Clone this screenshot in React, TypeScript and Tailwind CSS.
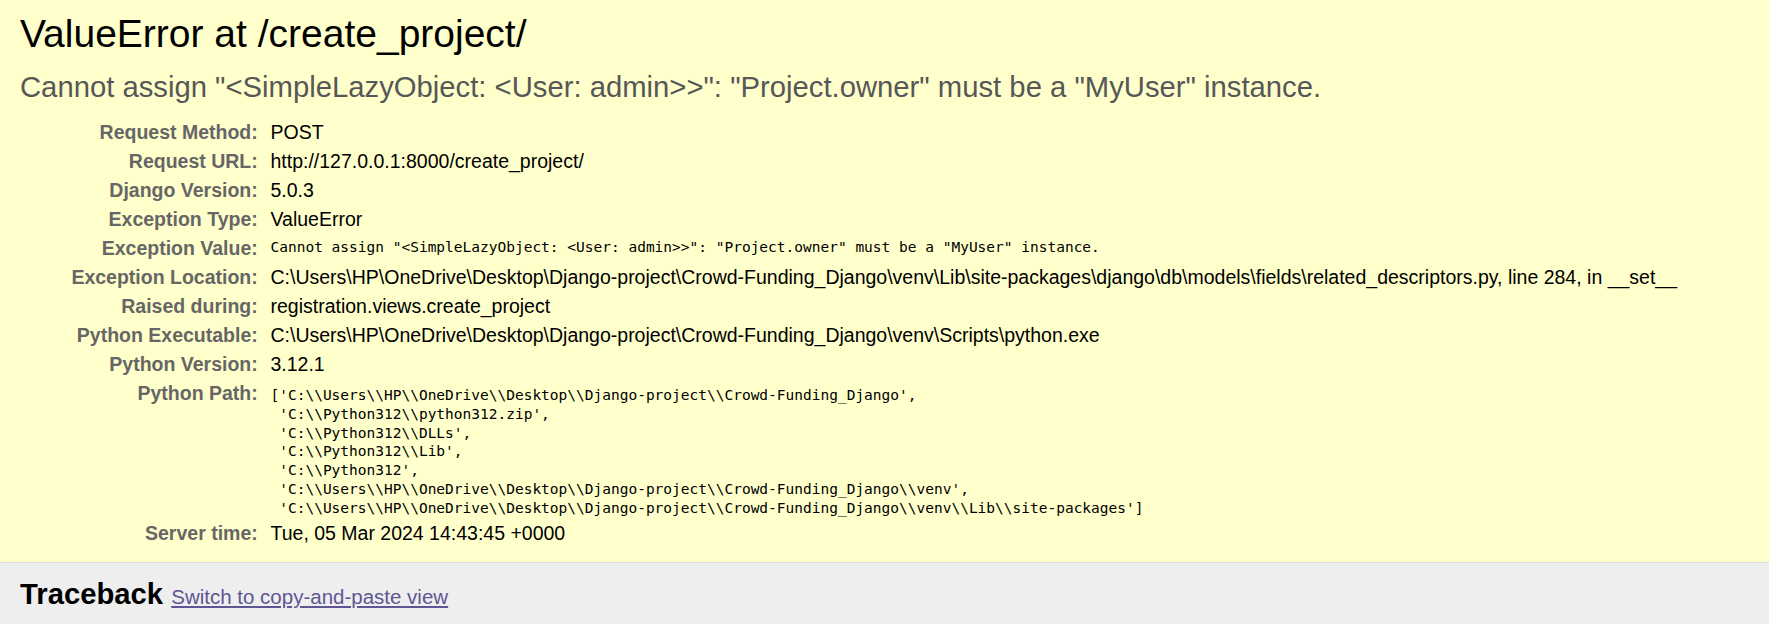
const SANS = "font-['Liberation_Sans',Arial,sans-serif]";
const MONO = "font-['DejaVu_Sans_Mono',monospace]";

type Row = { label: string; value: string; mono?: boolean };

const rows: Row[] = [
  { label: "Request Method:", value: "POST" },
  { label: "Request URL:", value: "http://127.0.0.1:8000/create_project/" },
  { label: "Django Version:", value: "5.0.3" },
  { label: "Exception Type:", value: "ValueError" },
  {
    label: "Exception Value:",
    value: 'Cannot assign "<SimpleLazyObject: <User: admin>>": "Project.owner" must be a "MyUser" instance.',
    mono: true,
  },
  {
    label: "Exception Location:",
    value:
      "C:\\Users\\HP\\OneDrive\\Desktop\\Django-project\\Crowd-Funding_Django\\venv\\Lib\\site-packages\\django\\db\\models\\fields\\related_descriptors.py, line 284, in __set__",
  },
  { label: "Raised during:", value: "registration.views.create_project" },
  {
    label: "Python Executable:",
    value: "C:\\Users\\HP\\OneDrive\\Desktop\\Django-project\\Crowd-Funding_Django\\venv\\Scripts\\python.exe",
  },
  { label: "Python Version:", value: "3.12.1" },
];

const sysPath = [
  "['C:\\\\Users\\\\HP\\\\OneDrive\\\\Desktop\\\\Django-project\\\\Crowd-Funding_Django',",
  " 'C:\\\\Python312\\\\python312.zip',",
  " 'C:\\\\Python312\\\\DLLs',",
  " 'C:\\\\Python312\\\\Lib',",
  " 'C:\\\\Python312',",
  " 'C:\\\\Users\\\\HP\\\\OneDrive\\\\Desktop\\\\Django-project\\\\Crowd-Funding_Django\\\\venv',",
  " 'C:\\\\Users\\\\HP\\\\OneDrive\\\\Desktop\\\\Django-project\\\\Crowd-Funding_Django\\\\venv\\\\Lib\\\\site-packages']",
];

function Label({ children }: { children: string }) {
  return (
    <div className="pr-[9.75px] text-right text-[19.5px] font-bold leading-[29px] text-[#666]">{children}</div>
  );
}

export default function App() {
  return (
    <div className={`${SANS} min-h-screen bg-white text-black`}>
      <div className="border-b border-[#ddd] bg-[#ffc] px-5 pt-[11px] pb-[14.5px]">
        <h1 className="text-[39px] font-normal leading-[45px]">ValueError at /create_project/</h1>
        <pre className={`${SANS} mt-[14px] text-[29.25px] leading-[34px] whitespace-pre-wrap text-[#575757]`}>
          Cannot assign "&lt;SimpleLazyObject: &lt;User: admin&gt;&gt;": "Project.owner" must be a "MyUser" instance.
        </pre>

        <div className="mt-[14px] grid grid-cols-[247.5px_1fr]">
          {rows.map((r) => (
            <div key={r.label} className="contents">
              <Label>{r.label}</Label>
              {r.mono ? (
                <div className="h-[29px] pt-[4px] pl-[3px]">
                  <pre className={`${MONO} text-[14.5px] leading-[18.9px] whitespace-pre`}>{r.value}</pre>
                </div>
              ) : (
                <div className="pl-[3px] text-[19.5px] leading-[29px] whitespace-nowrap">{r.value}</div>
              )}
            </div>
          ))}

          <Label>Python Path:</Label>
          <div className="pt-[6.75px] pb-[0.7px] pl-[3px]">
            <pre className={`${MONO} text-[14.5px] leading-[18.9px] whitespace-pre`}>{sysPath.join("\n")}</pre>
          </div>

          <Label>Server time:</Label>
          <div className="pl-[3px] text-[19.5px] leading-[29px]">Tue, 05 Mar 2024 14:43:45 +0000</div>
        </div>
      </div>

      <div className="bg-[#eee] px-5 pt-[14px] pb-[20px]">
        <h2 className="text-[29.25px] font-bold leading-[34px]">
          Traceback{" "}
          <span className="text-[20.5px] font-normal">
            <a href="#" className="text-[#5E5694] underline">
              Switch to copy-and-paste view
            </a>
          </span>
        </h2>
      </div>
    </div>
  );
}
